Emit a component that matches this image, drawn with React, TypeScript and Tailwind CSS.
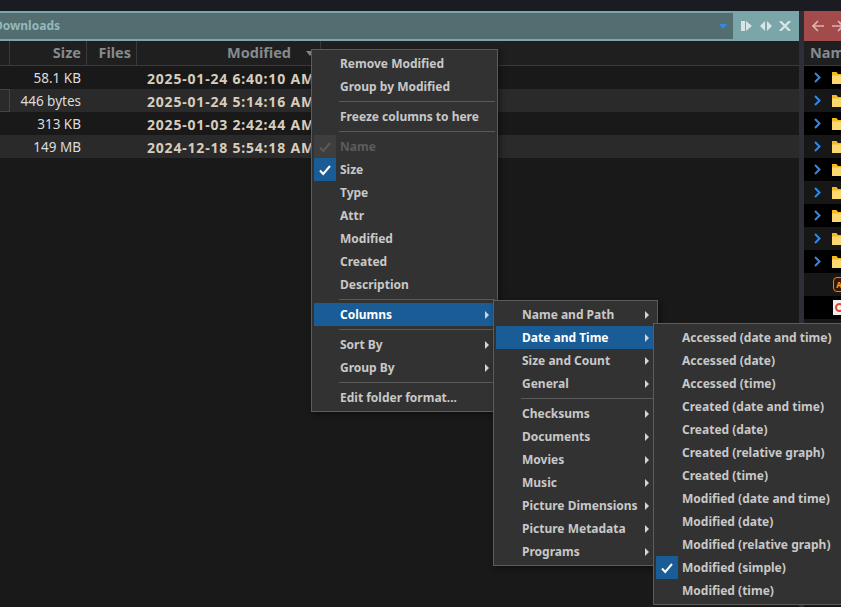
const font = { fontFamily: '"Noto Sans", sans-serif' };

const rows = [
  ["58.1 KB", "2025-01-24 6:40:10 AM"],
  ["446 bytes", "2025-01-24 5:14:16 AM"],
  ["313 KB", "2025-01-03 2:42:44 AM"],
  ["149 MB", "2024-12-18 5:54:18 AM"],
];

function Check({ dim }: { dim?: boolean }) {
  return (
    <svg width="14" height="12" viewBox="0 0 14 12" fill="none">
      <path d="M2 6.5 L5.2 10 L12 2" stroke={dim ? "#5a5a5a" : "#ffffff"} strokeWidth="2" />
    </svg>
  );
}

function Arrow() {
  return (
    <svg width="6" height="8" viewBox="0 0 6 8" className="shrink-0">
      <path d="M1 0 L5 4 L1 8 Z" fill="#d4d4d4" />
    </svg>
  );
}

type Item = { t?: string; sep?: boolean; check?: boolean; dim?: boolean; active?: boolean; sub?: boolean };

function Menu({ items, className, left }: { items: Item[]; className: string; left: number }) {
  return (
    <div className={"absolute z-10 border border-[#5c5c5c] bg-[#323232] px-0.5 py-0.5 shadow-[2px_2px_6px_rgba(0,0,0,0.45)] " + className}>
      {items.map((it, i) =>
        it.sep ? (
          <div key={i} className="flex h-[7px] items-center" style={{ paddingLeft: left - 3 }}>
            <div className="h-px w-full bg-[#5a5a5a]" />
          </div>
        ) : (
          <div
            key={i}
            className={
              "flex h-[23px] items-center pr-[5px] text-xs font-bold whitespace-nowrap " +
              (it.active ? "bg-[#1a5c96] text-white " : it.dim ? "text-[#5c5c5c] " : "text-[#c8c8c8] ")
            }
          >
            <div
              className={
                "mr-[4px] flex h-[23px] w-[22px] shrink-0 items-center justify-center " +
                (it.check && !it.dim ? "bg-[#1a5c96] " : it.check ? "bg-[#3e3e3e] " : "")
              }
            >
              {it.check && <Check dim={it.dim} />}
            </div>
            <span className="flex-1">{it.t}</span>
            {it.sub && <Arrow />}
          </div>
        ),
      )}
    </div>
  );
}

const menu1: Item[] = [
  { t: "Remove Modified" },
  { t: "Group by Modified" },
  { sep: true },
  { t: "Freeze columns to here" },
  { sep: true },
  { t: "Name", check: true, dim: true },
  { t: "Size", check: true },
  { t: "Type" },
  { t: "Attr" },
  { t: "Modified" },
  { t: "Created" },
  { t: "Description" },
  { sep: true },
  { t: "Columns", active: true, sub: true },
  { sep: true },
  { t: "Sort By", sub: true },
  { t: "Group By", sub: true },
  { sep: true },
  { t: "Edit folder format..." },
];
const menu2: Item[] = [
  { t: "Name and Path", sub: true },
  { t: "Date and Time", sub: true, active: true },
  { t: "Size and Count", sub: true },
  { t: "General", sub: true },
  { sep: true },
  { t: "Checksums", sub: true },
  { t: "Documents", sub: true },
  { t: "Movies", sub: true },
  { t: "Music", sub: true },
  { t: "Picture Dimensions", sub: true },
  { t: "Picture Metadata", sub: true },
  { t: "Programs", sub: true },
];
const menu3: Item[] = [
  "Accessed (date and time)",
  "Accessed (date)",
  "Accessed (time)",
  "Created (date and time)",
  "Created (date)",
  "Created (relative graph)",
  "Created (time)",
  "Modified (date and time)",
  "Modified (date)",
  "Modified (relative graph)",
].map((t) => ({ t }));

function Folder() {
  return (
    <svg width="12" height="13" viewBox="0 0 12 13" className="shrink-0">
      <path d="M0 1 H4.5 L6 3 H12 V13 H0 Z" fill="#f5b921" />
      <path d="M0 4.5 H12 V13 H0 Z" fill="#fcd870" />
    </svg>
  );
}

function Chevron() {
  return (
    <svg width="9" height="11" viewBox="0 0 9 11" fill="none" className="shrink-0">
      <path d="M2 1 L6.5 5.5 L2 10" stroke="#2f8ae8" strokeWidth="2" />
    </svg>
  );
}

export default function App() {
  return (
    <div className="relative flex h-[607px] w-[841px] flex-col overflow-hidden bg-[#1b1b22]" style={font}>
      <div className="h-[11px] shrink-0" />
      <div className="flex min-h-0 flex-1">
        {/* left pane */}
        <div className="flex w-[799px] shrink-0 flex-col bg-[#191919]">
          <div className="flex h-[30px] shrink-0 border-y-2 border-[#7aa5a9] bg-[#7aa5a9]">
            <div className="flex w-[733px] shrink-0 items-center justify-between overflow-hidden bg-[#546d70] pr-1.5 text-xs font-bold text-[#93b9bb]">
              <span className="-ml-[6px]">Downloads</span>
              <svg width="8" height="5" viewBox="0 0 8 5">
                <path d="M0 0 H8 L4 5 Z" fill="#2f8ae8" />
              </svg>
            </div>
            <div className="flex flex-1 items-center justify-around px-1">
              <svg width="12" height="10" viewBox="0 0 12 10">
                <path d="M0 0 H4 V10 H0 Z M5 0 L11 5 L5 10 Z" fill="#d8e4e5" />
              </svg>
              <svg width="12" height="10" viewBox="0 0 12 10">
                <path d="M5 0 V10 L0 5 Z M7 0 L12 5 L7 10 Z" fill="#d8e4e5" />
              </svg>
              <svg width="12" height="10" viewBox="0 0 12 10" fill="none">
                <path d="M1 0 L11 10 M11 0 L1 10" stroke="#d8e4e5" strokeWidth="2.4" />
              </svg>
            </div>
          </div>
          <div className="flex h-[25px] shrink-0 border-b border-[#3a3a3a] bg-[#1f1f1f] text-[14.5px] font-bold text-[#858a8e]">
            <div className="w-[10px] border-r border-[#3a3a3a]" />
            <div className="flex w-[77px] items-center justify-end border-r border-[#3a3a3a] pr-[5px]">Size</div>
            <div className="flex w-[50px] items-center justify-end border-r border-[#3a3a3a] pr-[5px]">Files</div>
            <div className="flex w-[184px] items-center justify-end gap-2.5 border-r border-[#3a3a3a] pr-[5px]">
              <span className="mr-[5px]">Modified</span>
              <svg width="8" height="5" viewBox="0 0 8 5" className="mr-[1px]">
                <path d="M0 0 H8 L4 5 Z" fill="#858a8e" />
              </svg>
            </div>
          </div>
          {rows.map((r, i) => (
            <div key={i} className={"flex h-[23px] shrink-0 items-center text-[13.5px] text-[#dcdcdc] " + (i % 2 ? "bg-[#2a2a2a]" : "bg-[#191919]")}>
              <div className={"h-full w-[10px] " + (i === 1 ? "border-y border-r border-[#444444]" : "")} />
              <div className="w-[71px] pt-[2px] text-right whitespace-nowrap">{r[0]}</div>
              <div className="ml-[66px] pt-[2px] text-sm font-bold tracking-[0.8px] whitespace-nowrap text-[#d8cdbd]">{r[1]}</div>
            </div>
          ))}
        </div>
        {/* splitter */}
        <div className="w-[5px] shrink-0 bg-[#2e2e38]" />
        {/* right pane */}
        <div className="flex min-w-0 flex-1 flex-col bg-black">
          <div className="flex h-[30px] shrink-0 items-center gap-2 border-y-2 border-[#a34a4a] bg-[#a34a4a] pl-2">
            <svg width="12" height="12" viewBox="0 0 12 12" fill="none" className="shrink-0">
              <path d="M6 1 L1 6 L6 11 M1 6 H12" stroke="#e0b4b4" strokeWidth="1.6" />
            </svg>
            <svg width="12" height="12" viewBox="0 0 12 12" fill="none" className="shrink-0">
              <path d="M6 1 L11 6 L6 11 M0 6 H11" stroke="#e0b4b4" strokeWidth="1.6" />
            </svg>
          </div>
          <div className="flex h-[25px] shrink-0 items-center border-b border-[#3a3a3a] bg-[#1f1f1f] pl-1.5 text-[14.5px] font-bold whitespace-nowrap text-[#858a8e]">
            Name
          </div>
          {Array.from({ length: 9 }).map((_, i) => (
            <div key={i} className={"flex h-[23px] shrink-0 items-center gap-[10px] pl-[9px] " + (i % 2 ? "bg-[#171717]" : "bg-black")}>
              <Chevron />
              <Folder />
            </div>
          ))}
          <div className="flex h-[23px] shrink-0 items-center bg-[#171717] pl-[29px]">
            <div className="flex h-[15px] w-[12px] shrink-0 items-center justify-center overflow-hidden rounded-sm border border-[#d98a1e] bg-[#3a1500] text-[8px] font-bold text-[#f5a623]">A</div>
          </div>
          <div className="flex h-[23px] shrink-0 items-center bg-black pl-[29px]">
            <div className="flex h-[15px] w-[12px] shrink-0 items-center justify-center bg-[#eeeeee]">
              <div className="h-[9px] w-[9px] rounded-full border-2 border-[#d9452f]" />
            </div>
          </div>
          <div className="flex-1 bg-[#171717]" />
        </div>
      </div>

      <Menu items={menu1} left={28} className="top-[49px] left-[311px] w-[187px]" />
      <Menu items={menu2} left={28} className="top-[300px] left-[493px] w-[165px]" />
      <div className="absolute top-[323px] left-[653px] z-20 border border-[#5c5c5c] bg-[#323232] px-0.5 py-0.5">
        {[...menu3, { t: "Modified (simple)", check: true }, { t: "Modified (time)" }].map((it: Item, i) => (
          <div key={i} className="flex h-[23px] items-center pr-2 text-xs font-bold whitespace-nowrap text-[#c8c8c8]">
            <div className={"mr-[4px] flex h-[23px] w-[22px] shrink-0 items-center justify-center " + (it.check ? "bg-[#1a5c96]" : "")}>
              {it.check && <Check />}
            </div>
            <span>{it.t}</span>
          </div>
        ))}
      </div>
    </div>
  );
}
